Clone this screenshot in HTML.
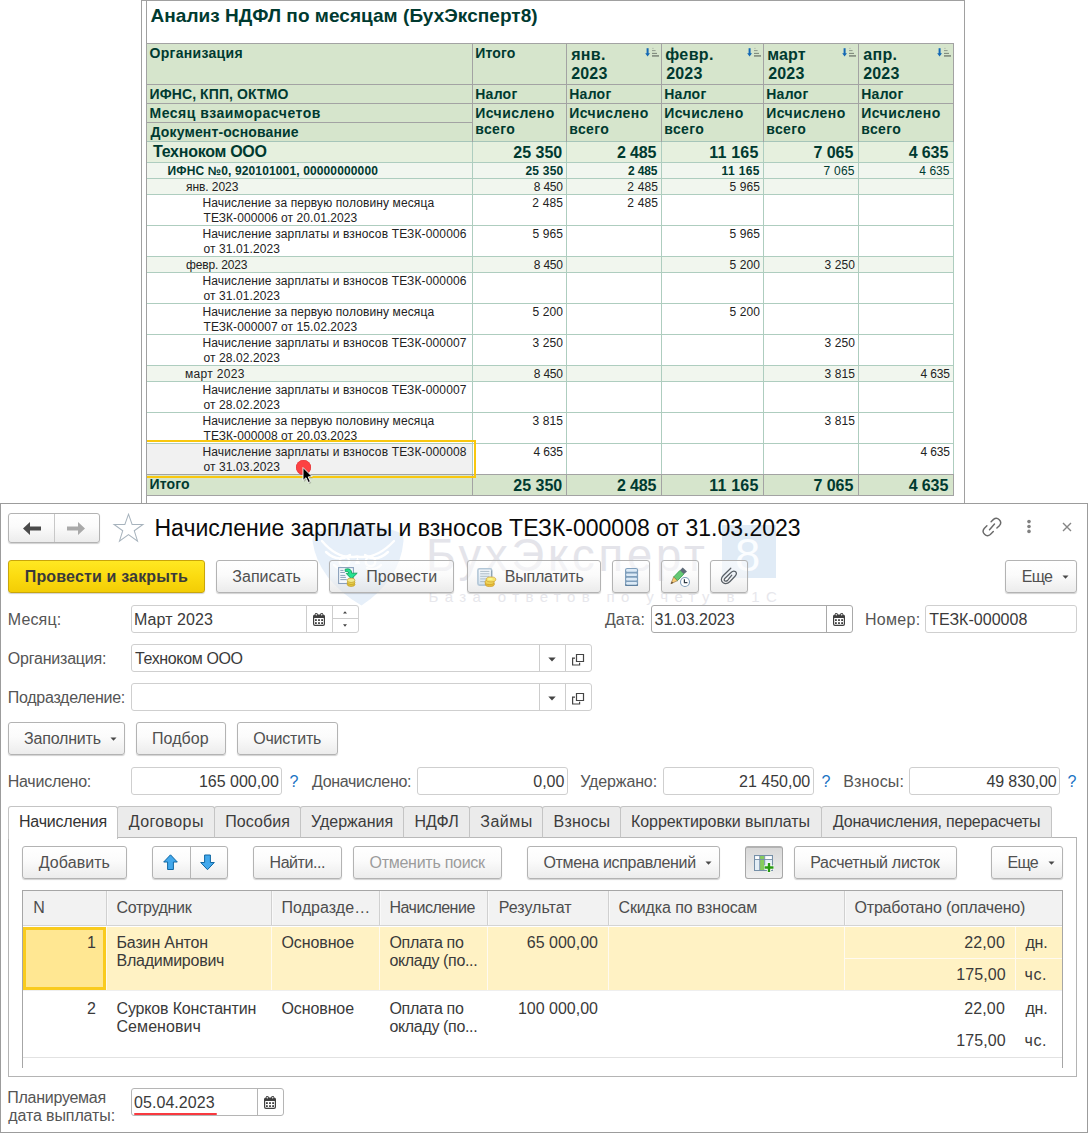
<!DOCTYPE html><html><head><meta charset="utf-8"><title>1C</title><style>
*{box-sizing:border-box;margin:0;padding:0}
html,body{width:1088px;height:1133px;overflow:hidden;background:#fff}
body{font-family:"Liberation Sans",sans-serif;position:relative;color:#333}
.a{position:absolute;white-space:nowrap}
.ln{position:absolute;background:#9c9c9c}
/* report */
.rc{position:absolute;overflow:hidden}
.rt{position:absolute;white-space:nowrap;color:#222;font-size:12px;line-height:15px}
.hb{font-weight:bold;color:#003a30}
.num{text-align:right}
/* form */
.btn{position:absolute;border:1px solid #b3b3b3;border-radius:3px;background:linear-gradient(#ffffff 0%,#fbfbfb 45%,#ececec 100%);box-shadow:0 1px 1px rgba(0,0,0,.18);font-size:15.33px;color:#444;text-align:center;white-space:nowrap}
.fld{position:absolute;border:1px solid #cfcfcf;border-radius:3px;background:#fff;font-size:15.33px;color:#333;white-space:nowrap}
.lbl{position:absolute;font-size:15.33px;color:#4a4a4a;white-space:nowrap}
.tab{position:absolute;top:806px;height:32px;border:1px solid #c4c4c4;border-bottom:none;background:#ebebeb;font-size:15.33px;color:#3c3c3c;text-align:center;white-space:nowrap;border-radius:3px 3px 0 0}
.th{position:absolute;top:891px;height:35px;background:#f2f2f2;font-size:15.33px;color:#4d4d4d;white-space:nowrap;line-height:35px}
.td{position:absolute;font-size:15.33px;color:#333;white-space:nowrap;line-height:18px}
</style></head><body>
<div class="ln" style="left:141px;top:0px;width:1px;height:504px;background:#a0a0a0"></div>
<div class="ln" style="left:146px;top:0px;width:1px;height:504px;background:#a0a0a0"></div>
<div class="ln" style="left:964px;top:0px;width:1px;height:504px;background:#a0a0a0"></div>
<div class="ln" style="left:141px;top:0px;width:824px;height:1px;background:#a0a0a0"></div>
<div class="a" style="left:calc(151.50px - 1.00px);top:3.67px;font-size:19px;font-weight:bold;line-height:24px;color:#003a30"><span style="letter-spacing:0.043px;">Анализ НДФЛ по месяцам (БухЭксперт8)</span></div>
<div class="a" style="left:146px;top:43px;width:808px;height:99px;background:#d6e5cc;"></div>
<div class="a" style="left:146px;top:142px;width:808px;height:20px;background:#e6f0de;"></div>
<div class="a" style="left:146px;top:163px;width:808px;height:15px;background:#f1f6ef;"></div>
<div class="a" style="left:146px;top:179px;width:808px;height:15px;background:#f1f6ee;"></div>
<div class="a" style="left:146px;top:257px;width:808px;height:15px;background:#f1f6ee;"></div>
<div class="a" style="left:146px;top:366px;width:808px;height:15px;background:#f1f6ee;"></div>
<div class="a" style="left:146px;top:475px;width:808px;height:20px;background:#d6e5cc;"></div>
<div class="ln" style="left:146px;top:162px;width:808px;height:1px;background:#aecdbf"></div>
<div class="ln" style="left:146px;top:178px;width:808px;height:1px;background:#aecdbf"></div>
<div class="ln" style="left:146px;top:194px;width:808px;height:1px;background:#aecdbf"></div>
<div class="ln" style="left:146px;top:225px;width:808px;height:1px;background:#aecdbf"></div>
<div class="ln" style="left:146px;top:256px;width:808px;height:1px;background:#aecdbf"></div>
<div class="ln" style="left:146px;top:272px;width:808px;height:1px;background:#aecdbf"></div>
<div class="ln" style="left:146px;top:303px;width:808px;height:1px;background:#aecdbf"></div>
<div class="ln" style="left:146px;top:334px;width:808px;height:1px;background:#aecdbf"></div>
<div class="ln" style="left:146px;top:365px;width:808px;height:1px;background:#aecdbf"></div>
<div class="ln" style="left:146px;top:381px;width:808px;height:1px;background:#aecdbf"></div>
<div class="ln" style="left:146px;top:412px;width:808px;height:1px;background:#aecdbf"></div>
<div class="ln" style="left:146px;top:443px;width:808px;height:1px;background:#aecdbf"></div>
<div class="ln" style="left:472px;top:142px;width:1px;height:333px;background:#aecdbf"></div>
<div class="ln" style="left:566px;top:142px;width:1px;height:333px;background:#aecdbf"></div>
<div class="ln" style="left:661px;top:142px;width:1px;height:333px;background:#aecdbf"></div>
<div class="ln" style="left:763px;top:142px;width:1px;height:333px;background:#aecdbf"></div>
<div class="ln" style="left:858px;top:142px;width:1px;height:333px;background:#aecdbf"></div>
<div class="ln" style="left:953px;top:142px;width:1px;height:333px;background:#aecdbf"></div>
<div class="ln" style="left:146px;top:142px;width:1px;height:362px;background:#a0a0a0"></div>
<div class="ln" style="left:146px;top:43px;width:808px;height:1px;background:#a3a3a3"></div>
<div class="ln" style="left:146px;top:84px;width:808px;height:1px;background:#a3a3a3"></div>
<div class="ln" style="left:146px;top:103px;width:808px;height:1px;background:#a3a3a3"></div>
<div class="ln" style="left:146px;top:122px;width:327px;height:1px;background:#a3a3a3"></div>
<div class="ln" style="left:146px;top:141px;width:808px;height:1px;background:#a6c5b9"></div>
<div class="ln" style="left:146px;top:43px;width:1px;height:99px;background:#a3a3a3"></div>
<div class="ln" style="left:472px;top:43px;width:1px;height:99px;background:#a3a3a3"></div>
<div class="ln" style="left:566px;top:43px;width:1px;height:99px;background:#a3a3a3"></div>
<div class="ln" style="left:661px;top:43px;width:1px;height:99px;background:#a3a3a3"></div>
<div class="ln" style="left:763px;top:43px;width:1px;height:99px;background:#a3a3a3"></div>
<div class="ln" style="left:858px;top:43px;width:1px;height:99px;background:#a3a3a3"></div>
<div class="ln" style="left:953px;top:43px;width:1px;height:99px;background:#a3a3a3"></div>
<div class="ln" style="left:146px;top:474px;width:808px;height:1px;background:#a3a3a3"></div>
<div class="ln" style="left:146px;top:495px;width:808px;height:1px;background:#a3a3a3"></div>
<div class="ln" style="left:146px;top:474px;width:1px;height:22px;background:#a3a3a3"></div>
<div class="ln" style="left:472px;top:474px;width:1px;height:22px;background:#a3a3a3"></div>
<div class="ln" style="left:566px;top:474px;width:1px;height:22px;background:#a3a3a3"></div>
<div class="ln" style="left:661px;top:474px;width:1px;height:22px;background:#a3a3a3"></div>
<div class="ln" style="left:763px;top:474px;width:1px;height:22px;background:#a3a3a3"></div>
<div class="ln" style="left:858px;top:474px;width:1px;height:22px;background:#a3a3a3"></div>
<div class="ln" style="left:953px;top:474px;width:1px;height:22px;background:#a3a3a3"></div>
<div class="a" style="left:calc(150.50px - 1.00px);top:44.40px;font-size:14px;font-weight:bold;line-height:18px;color:#003a30"><span style="letter-spacing:0.300px;">Организация</span></div>
<div class="a" style="left:calc(150.50px - 1.00px);top:85.15px;font-size:14px;font-weight:bold;line-height:18px;color:#003a30"><span style="letter-spacing:0.100px;">ИФНС, КПП, ОКТМО</span></div>
<div class="a" style="left:calc(150.50px - 1.00px);top:103.90px;font-size:14px;font-weight:bold;line-height:18px;color:#003a30"><span style="letter-spacing:0.487px;">Месяц взаиморасчетов</span></div>
<div class="a" style="left:calc(150.50px - 0.00px);top:123.15px;font-size:14px;font-weight:bold;line-height:18px;color:#003a30"><span style="letter-spacing:0.147px;">Документ-основание</span></div>
<div class="a" style="left:calc(476.25px - 1.00px);top:44.40px;font-size:14px;font-weight:bold;line-height:18px;color:#003a30"><span style="letter-spacing:0.125px;">Итого</span></div>
<div class="a" style="left:calc(571.20px - 0.00px);top:44.96px;font-size:16px;font-weight:bold;line-height:20px;color:#003a30"><span style="letter-spacing:0.333px;">янв.</span></div>
<div class="a" style="left:calc(571.20px - 0.00px);top:64.21px;font-size:16px;font-weight:bold;line-height:20px;color:#003a30"><span style="letter-spacing:0.167px;">2023</span></div>
<div class="a" style="left:calc(666.20px - 1.00px);top:44.96px;font-size:16px;font-weight:bold;line-height:20px;color:#003a30"><span style="letter-spacing:0.375px;">февр.</span></div>
<div class="a" style="left:calc(666.20px - 0.00px);top:64.21px;font-size:16px;font-weight:bold;line-height:20px;color:#003a30"><span style="letter-spacing:0.167px;">2023</span></div>
<div class="a" style="left:calc(768.20px - 1.00px);top:44.96px;font-size:16px;font-weight:bold;line-height:20px;color:#003a30"><span style="letter-spacing:0.167px;">март</span></div>
<div class="a" style="left:calc(768.20px - 0.00px);top:64.21px;font-size:16px;font-weight:bold;line-height:20px;color:#003a30"><span style="letter-spacing:0.167px;">2023</span></div>
<div class="a" style="left:calc(863.20px - 0.00px);top:44.96px;font-size:16px;font-weight:bold;line-height:20px;color:#003a30"><span style="letter-spacing:0.333px;">апр.</span></div>
<div class="a" style="left:calc(863.20px - 0.00px);top:64.21px;font-size:16px;font-weight:bold;line-height:20px;color:#003a30"><span style="letter-spacing:0.167px;">2023</span></div>
<div class="a" style="left:calc(476.25px - 1.00px);top:84.90px;font-size:14px;font-weight:bold;line-height:18px;color:#003a30"><span style="letter-spacing:0.250px;">Налог</span></div>
<div class="a" style="left:calc(476.25px - 1.00px);top:104.15px;font-size:14px;font-weight:bold;line-height:18px;color:#003a30"><span style="letter-spacing:0.438px;">Исчислено</span></div>
<div class="a" style="left:calc(476.25px - 1.00px);top:119.90px;font-size:14px;font-weight:bold;line-height:18px;color:#003a30"><span style="letter-spacing:0.375px;">всего</span></div>
<div class="a" style="left:calc(570.25px - 1.00px);top:84.90px;font-size:14px;font-weight:bold;line-height:18px;color:#003a30"><span style="letter-spacing:0.250px;">Налог</span></div>
<div class="a" style="left:calc(570.25px - 1.00px);top:104.15px;font-size:14px;font-weight:bold;line-height:18px;color:#003a30"><span style="letter-spacing:0.438px;">Исчислено</span></div>
<div class="a" style="left:calc(570.25px - 1.00px);top:119.90px;font-size:14px;font-weight:bold;line-height:18px;color:#003a30"><span style="letter-spacing:0.375px;">всего</span></div>
<div class="a" style="left:calc(665.25px - 1.00px);top:84.90px;font-size:14px;font-weight:bold;line-height:18px;color:#003a30"><span style="letter-spacing:0.250px;">Налог</span></div>
<div class="a" style="left:calc(665.25px - 1.00px);top:104.15px;font-size:14px;font-weight:bold;line-height:18px;color:#003a30"><span style="letter-spacing:0.438px;">Исчислено</span></div>
<div class="a" style="left:calc(665.25px - 1.00px);top:119.90px;font-size:14px;font-weight:bold;line-height:18px;color:#003a30"><span style="letter-spacing:0.375px;">всего</span></div>
<div class="a" style="left:calc(767.25px - 1.00px);top:84.90px;font-size:14px;font-weight:bold;line-height:18px;color:#003a30"><span style="letter-spacing:0.250px;">Налог</span></div>
<div class="a" style="left:calc(767.25px - 1.00px);top:104.15px;font-size:14px;font-weight:bold;line-height:18px;color:#003a30"><span style="letter-spacing:0.438px;">Исчислено</span></div>
<div class="a" style="left:calc(767.25px - 1.00px);top:119.90px;font-size:14px;font-weight:bold;line-height:18px;color:#003a30"><span style="letter-spacing:0.375px;">всего</span></div>
<div class="a" style="left:calc(862.25px - 1.00px);top:84.90px;font-size:14px;font-weight:bold;line-height:18px;color:#003a30"><span style="letter-spacing:0.250px;">Налог</span></div>
<div class="a" style="left:calc(862.25px - 1.00px);top:104.15px;font-size:14px;font-weight:bold;line-height:18px;color:#003a30"><span style="letter-spacing:0.438px;">Исчислено</span></div>
<div class="a" style="left:calc(862.25px - 1.00px);top:119.90px;font-size:14px;font-weight:bold;line-height:18px;color:#003a30"><span style="letter-spacing:0.375px;">всего</span></div>
<svg class="a" style="left:645px;top:47px" width="15" height="11" viewBox="0 0 15 11"><path d="M2.6 1.2v6" stroke="#1468b4" stroke-width="2"/><path d="M0.2 6.2h4.8L2.6 9.5z" fill="#1468b4"/><path d="M7 1.4h1.8" stroke="#b9c4b4" stroke-width="1"/><path d="M7 3.6h3.6" stroke="#8f998c" stroke-width="1"/><path d="M7 6.4h5" stroke="#7f8a7c" stroke-width="1.1"/><path d="M7 8.9h7" stroke="#8a9486" stroke-width="1.8"/></svg>
<svg class="a" style="left:747px;top:47px" width="15" height="11" viewBox="0 0 15 11"><path d="M2.6 1.2v6" stroke="#1468b4" stroke-width="2"/><path d="M0.2 6.2h4.8L2.6 9.5z" fill="#1468b4"/><path d="M7 1.4h1.8" stroke="#b9c4b4" stroke-width="1"/><path d="M7 3.6h3.6" stroke="#8f998c" stroke-width="1"/><path d="M7 6.4h5" stroke="#7f8a7c" stroke-width="1.1"/><path d="M7 8.9h7" stroke="#8a9486" stroke-width="1.8"/></svg>
<svg class="a" style="left:842px;top:47px" width="15" height="11" viewBox="0 0 15 11"><path d="M2.6 1.2v6" stroke="#1468b4" stroke-width="2"/><path d="M0.2 6.2h4.8L2.6 9.5z" fill="#1468b4"/><path d="M7 1.4h1.8" stroke="#b9c4b4" stroke-width="1"/><path d="M7 3.6h3.6" stroke="#8f998c" stroke-width="1"/><path d="M7 6.4h5" stroke="#7f8a7c" stroke-width="1.1"/><path d="M7 8.9h7" stroke="#8a9486" stroke-width="1.8"/></svg>
<svg class="a" style="left:937px;top:47px" width="15" height="11" viewBox="0 0 15 11"><path d="M2.6 1.2v6" stroke="#1468b4" stroke-width="2"/><path d="M0.2 6.2h4.8L2.6 9.5z" fill="#1468b4"/><path d="M7 1.4h1.8" stroke="#b9c4b4" stroke-width="1"/><path d="M7 3.6h3.6" stroke="#8f998c" stroke-width="1"/><path d="M7 6.4h5" stroke="#7f8a7c" stroke-width="1.1"/><path d="M7 8.9h7" stroke="#8a9486" stroke-width="1.8"/></svg>
<div class="a" style="left:calc(153.00px - 0.00px);top:142.21px;font-size:16px;font-weight:bold;line-height:20px;color:#003a30"><span style="letter-spacing:-0.273px;">Техноком ООО</span></div>
<div class="a" style="left:calc(513.25px - 0.00px);top:142.71px;font-size:16px;font-weight:bold;line-height:20px;color:#003a30"><span style="letter-spacing:0.000px;">25&nbsp;350</span></div>
<div class="a" style="left:calc(617.00px - 0.00px);top:142.71px;font-size:16px;font-weight:bold;line-height:20px;color:#003a30"><span style="letter-spacing:-0.188px;">2&nbsp;485</span></div>
<div class="a" style="left:calc(710.25px - 1.00px);top:142.71px;font-size:16px;font-weight:bold;line-height:20px;color:#003a30"><span style="letter-spacing:0.200px;">11&nbsp;165</span></div>
<div class="a" style="left:calc(814.50px - 1.00px);top:142.71px;font-size:16px;font-weight:bold;line-height:20px;color:#003a30"><span style="letter-spacing:-0.062px;">7&nbsp;065</span></div>
<div class="a" style="left:calc(908.75px - 0.00px);top:142.71px;font-size:16px;font-weight:bold;line-height:20px;color:#003a30"><span style="letter-spacing:-0.125px;">4&nbsp;635</span></div>
<div class="a" style="left:calc(168.50px - 1.00px);top:163.89px;font-size:12px;font-weight:bold;line-height:15px;color:#003a30"><span style="letter-spacing:0.133px;">ИФНС №0, 920101001, 00000000000</span></div>
<div class="a" style="left:calc(525.50px - 0.00px);top:163.89px;font-size:12px;font-weight:bold;line-height:15px;color:#003a30"><span style="letter-spacing:0.200px;">25&nbsp;350</span></div>
<div class="a" style="left:calc(628.00px - 0.00px);top:163.89px;font-size:12px;font-weight:bold;line-height:15px;color:#003a30"><span style="letter-spacing:-0.125px;">2&nbsp;485</span></div>
<div class="a" style="left:calc(722.50px - 1.00px);top:163.89px;font-size:12px;font-weight:bold;line-height:15px;color:#003a30"><span style="letter-spacing:0.400px;">11&nbsp;165</span></div>
<div class="a" style="left:calc(824.50px - 1.00px);top:163.89px;font-size:12px;line-height:15px;color:#003a30"><span style="letter-spacing:0.250px;">7&nbsp;065</span></div>
<div class="a" style="left:calc(919.25px - 0.00px);top:163.89px;font-size:12px;line-height:15px;color:#003a30"><span style="letter-spacing:0.062px;">4&nbsp;635</span></div>
<div class="a" style="left:147px;top:444px;width:325px;height:30px;background:#f1f1f1;"></div>
<div class="a" style="left:calc(186.00px - 0.00px);top:179.79px;font-size:12px;line-height:15px;color:#222"><span style="letter-spacing:-0.062px;">янв. 2023</span></div>
<div class="a" style="left:calc(533.75px - 0.00px);top:179.79px;font-size:12px;line-height:15px;color:#222"><span style="letter-spacing:-0.188px;">8&nbsp;450</span></div>
<div class="a" style="left:calc(628.25px - 1.00px);top:179.79px;font-size:12px;line-height:15px;color:#222"><span style="letter-spacing:0.188px;">2&nbsp;485</span></div>
<div class="a" style="left:calc(730.50px - 1.00px);top:179.79px;font-size:12px;line-height:15px;color:#222"><span style="letter-spacing:0.125px;">5&nbsp;965</span></div>
<div class="a" style="left:calc(203.50px - 1.00px);top:195.59px;font-size:12px;line-height:15px;color:#222"><span style="letter-spacing:0.114px;">Начисление за первую половину месяца</span></div>
<div class="a" style="left:calc(203.50px - 0.00px);top:210.79px;font-size:12px;line-height:15px;color:#222"><span style="letter-spacing:0.073px;">ТЕЗК-000006 от 20.01.2023</span></div>
<div class="a" style="left:calc(533.25px - 1.00px);top:195.59px;font-size:12px;line-height:15px;color:#222"><span style="letter-spacing:0.188px;">2&nbsp;485</span></div>
<div class="a" style="left:calc(628.25px - 1.00px);top:195.59px;font-size:12px;line-height:15px;color:#222"><span style="letter-spacing:0.188px;">2&nbsp;485</span></div>
<div class="a" style="left:calc(203.50px - 1.00px);top:226.59px;font-size:12px;line-height:15px;color:#222"><span style="letter-spacing:0.144px;">Начисление зарплаты и взносов ТЕЗК-000006</span></div>
<div class="a" style="left:calc(203.50px - 0.00px);top:241.79px;font-size:12px;line-height:15px;color:#222"><span style="letter-spacing:0.104px;">от 31.01.2023</span></div>
<div class="a" style="left:calc(533.50px - 1.00px);top:226.59px;font-size:12px;line-height:15px;color:#222"><span style="letter-spacing:0.125px;">5&nbsp;965</span></div>
<div class="a" style="left:calc(730.50px - 1.00px);top:226.59px;font-size:12px;line-height:15px;color:#222"><span style="letter-spacing:0.125px;">5&nbsp;965</span></div>
<div class="a" style="left:calc(186.00px - 0.00px);top:257.79px;font-size:12px;line-height:15px;color:#222"><span style="letter-spacing:-0.167px;">февр. 2023</span></div>
<div class="a" style="left:calc(533.75px - 0.00px);top:257.79px;font-size:12px;line-height:15px;color:#222"><span style="letter-spacing:-0.188px;">8&nbsp;450</span></div>
<div class="a" style="left:calc(730.50px - 1.00px);top:257.79px;font-size:12px;line-height:15px;color:#222"><span style="letter-spacing:0.125px;">5&nbsp;200</span></div>
<div class="a" style="left:calc(825.50px - 1.00px);top:257.79px;font-size:12px;line-height:15px;color:#222"><span style="letter-spacing:0.125px;">3&nbsp;250</span></div>
<div class="a" style="left:calc(203.50px - 1.00px);top:273.59px;font-size:12px;line-height:15px;color:#222"><span style="letter-spacing:0.144px;">Начисление зарплаты и взносов ТЕЗК-000006</span></div>
<div class="a" style="left:calc(203.50px - 0.00px);top:288.79px;font-size:12px;line-height:15px;color:#222"><span style="letter-spacing:0.104px;">от 31.01.2023</span></div>
<div class="a" style="left:calc(203.50px - 1.00px);top:304.59px;font-size:12px;line-height:15px;color:#222"><span style="letter-spacing:0.114px;">Начисление за первую половину месяца</span></div>
<div class="a" style="left:calc(203.50px - 0.00px);top:319.79px;font-size:12px;line-height:15px;color:#222"><span style="letter-spacing:0.073px;">ТЕЗК-000007 от 15.02.2023</span></div>
<div class="a" style="left:calc(533.50px - 1.00px);top:304.59px;font-size:12px;line-height:15px;color:#222"><span style="letter-spacing:0.125px;">5&nbsp;200</span></div>
<div class="a" style="left:calc(730.50px - 1.00px);top:304.59px;font-size:12px;line-height:15px;color:#222"><span style="letter-spacing:0.125px;">5&nbsp;200</span></div>
<div class="a" style="left:calc(203.50px - 1.00px);top:335.59px;font-size:12px;line-height:15px;color:#222"><span style="letter-spacing:0.144px;">Начисление зарплаты и взносов ТЕЗК-000007</span></div>
<div class="a" style="left:calc(203.50px - 0.00px);top:350.79px;font-size:12px;line-height:15px;color:#222"><span style="letter-spacing:0.104px;">от 28.02.2023</span></div>
<div class="a" style="left:calc(533.50px - 1.00px);top:335.59px;font-size:12px;line-height:15px;color:#222"><span style="letter-spacing:0.125px;">3&nbsp;250</span></div>
<div class="a" style="left:calc(825.50px - 1.00px);top:335.59px;font-size:12px;line-height:15px;color:#222"><span style="letter-spacing:0.125px;">3&nbsp;250</span></div>
<div class="a" style="left:calc(186.00px - 1.00px);top:366.79px;font-size:12px;line-height:15px;color:#222"><span style="letter-spacing:0.312px;">март 2023</span></div>
<div class="a" style="left:calc(533.75px - 0.00px);top:366.79px;font-size:12px;line-height:15px;color:#222"><span style="letter-spacing:-0.188px;">8&nbsp;450</span></div>
<div class="a" style="left:calc(825.50px - 1.00px);top:366.79px;font-size:12px;line-height:15px;color:#222"><span style="letter-spacing:0.125px;">3&nbsp;815</span></div>
<div class="a" style="left:calc(920.50px - 0.00px);top:366.79px;font-size:12px;line-height:15px;color:#222"><span style="letter-spacing:-0.125px;">4&nbsp;635</span></div>
<div class="a" style="left:calc(203.50px - 1.00px);top:382.59px;font-size:12px;line-height:15px;color:#222"><span style="letter-spacing:0.144px;">Начисление зарплаты и взносов ТЕЗК-000007</span></div>
<div class="a" style="left:calc(203.50px - 0.00px);top:397.79px;font-size:12px;line-height:15px;color:#222"><span style="letter-spacing:0.104px;">от 28.02.2023</span></div>
<div class="a" style="left:calc(203.50px - 1.00px);top:413.59px;font-size:12px;line-height:15px;color:#222"><span style="letter-spacing:0.114px;">Начисление за первую половину месяца</span></div>
<div class="a" style="left:calc(203.50px - 0.00px);top:428.79px;font-size:12px;line-height:15px;color:#222"><span style="letter-spacing:0.073px;">ТЕЗК-000008 от 20.03.2023</span></div>
<div class="a" style="left:calc(533.50px - 1.00px);top:413.59px;font-size:12px;line-height:15px;color:#222"><span style="letter-spacing:0.125px;">3&nbsp;815</span></div>
<div class="a" style="left:calc(825.50px - 1.00px);top:413.59px;font-size:12px;line-height:15px;color:#222"><span style="letter-spacing:0.125px;">3&nbsp;815</span></div>
<div class="a" style="left:calc(203.50px - 1.00px);top:444.59px;font-size:12px;line-height:15px;color:#222"><span style="letter-spacing:0.144px;">Начисление зарплаты и взносов ТЕЗК-000008</span></div>
<div class="a" style="left:calc(203.50px - 0.00px);top:459.79px;font-size:12px;line-height:15px;color:#222"><span style="letter-spacing:0.104px;">от 31.03.2023</span></div>
<div class="a" style="left:calc(533.50px - 0.00px);top:444.59px;font-size:12px;line-height:15px;color:#222"><span style="letter-spacing:-0.125px;">4&nbsp;635</span></div>
<div class="a" style="left:calc(920.50px - 0.00px);top:444.59px;font-size:12px;line-height:15px;color:#222"><span style="letter-spacing:-0.125px;">4&nbsp;635</span></div>
<div class="a" style="left:calc(150.50px - 1.00px);top:475.15px;font-size:14px;font-weight:bold;line-height:18px;color:#003a30"><span style="letter-spacing:0.125px;">Итого</span></div>
<div class="a" style="left:calc(513.25px - 0.00px);top:475.71px;font-size:16px;font-weight:bold;line-height:20px;color:#003a30"><span style="letter-spacing:0.000px;">25&nbsp;350</span></div>
<div class="a" style="left:calc(617.00px - 0.00px);top:475.71px;font-size:16px;font-weight:bold;line-height:20px;color:#003a30"><span style="letter-spacing:-0.188px;">2&nbsp;485</span></div>
<div class="a" style="left:calc(710.25px - 1.00px);top:475.71px;font-size:16px;font-weight:bold;line-height:20px;color:#003a30"><span style="letter-spacing:0.200px;">11&nbsp;165</span></div>
<div class="a" style="left:calc(814.50px - 1.00px);top:475.71px;font-size:16px;font-weight:bold;line-height:20px;color:#003a30"><span style="letter-spacing:-0.062px;">7&nbsp;065</span></div>
<div class="a" style="left:calc(908.75px - 0.00px);top:475.71px;font-size:16px;font-weight:bold;line-height:20px;color:#003a30"><span style="letter-spacing:-0.125px;">4&nbsp;635</span></div>
<div class="a" style="left:147px;top:440px;width:329px;height:38px;border:2px solid #f9c70e;border-left:0"></div>
<div class="a" style="left:296px;top:460px;width:15px;height:15px;border-radius:8px;background:#fc4143;box-shadow:inset 0 0 0 0.6px #e0393b"></div>
<svg class="a" style="left:298px;top:463px" width="20" height="24" viewBox="298 463 20 24"><path d="M304 469.5L304 482L307 479.4L309.2 484L311.4 483L309.2 478.4L313 478.2Z" fill="#000" opacity=".18"/><path d="M303 467.5L303 480.4L306 477.7L308.2 482.5L310.4 481.5L308.2 476.9L312.1 476.6Z" fill="#000" stroke="#fff" stroke-width="0.9" stroke-linejoin="round"/></svg>
<div class="a" style="left:0;top:503px;width:1088px;height:630px;border:1px solid #9c9c9c;background:#fff"></div>
<svg class="a" style="left:305px;top:520px;" width="110" height="90" viewBox="305 520 110 90"><path d="M312.5 541Q312 534 318 532Q340 524 358 524.5Q378 524 398 532Q404 534 403.5 541Q400 580 361.5 605.5Q318 580 312.5 541z" fill="#e6eff9"/><g fill="none" stroke="#fff" stroke-width="2.4" stroke-linecap="round"><circle cx="344.5" cy="561.5" r="4.8"/><circle cx="370.5" cy="561.5" r="4.8"/><path d="M322 541Q338 560 357 556.5Q376 560 394 541"/><path d="M326 552Q338 563 350 555M388 552Q376 563 365 555"/><path d="M334 565Q340 571 348 568M381 565Q375 571 367 568"/></g><path d="M357.5 557l-2.6 7h5.2z" fill="#fff"/></svg>
<div class="a" style="left:calc(430px - 4.00px);top:530.77px;font-size:45.4px;line-height:50px;color:#e4e4ea;;"><span style="letter-spacing:3.778px;">БухЭксперт</span></div>
<div class="a" style="left:722px;top:525px;width:54px;height:53px;background:#e0ebf6;"></div>
<div class="a" style="left:calc(737px - 2.00px);top:530.77px;font-size:45.4px;line-height:50px;color:#fbfdff;;"><span style="letter-spacing:-182.000px;">8</span></div>
<div class="a" style="left:calc(429.5px - 1.00px);top:572.10px;font-size:15px;line-height:50px;color:#e7e7ec;;"><span style="letter-spacing:6.380px;">База ответов по учету в 1С</span></div>
<div class="btn" style="left:8px;top:513px;width:92px;height:30px;"></div>
<div class="ln" style="left:54px;top:514px;width:1px;height:28px;background:#c8c8c8"></div>
<svg class="a" style="left:22px;top:521px;" width="20" height="15" viewBox="0 0 20 15"><path d="M1 7.5L8 1v4.6h11v3.8H8V14z" fill="#4a4a4a"/></svg>
<svg class="a" style="left:66px;top:521px;" width="20" height="15" viewBox="0 0 20 15"><path d="M19 7.5L12 1v4.6H1v3.8h11V14z" fill="#a9a9a9"/></svg>
<svg class="a" style="left:112.4px;top:512.2px;" width="33" height="32" viewBox="0 0 31 30"><path d="M15.5 2l3.4 9.6h10.2l-8.2 6 3.1 9.8-8.5-6.1-8.5 6.1 3.1-9.8-8.2-6h10.2z" fill="#fff" stroke="#a7b3bd" stroke-width="0.95"/></svg>
<div class="a" style="left:calc(156.50px - 2.00px);top:514.28px;font-size:23px;line-height:28px;color:#0a0a0a"><span style="letter-spacing:0.009px;">Начисление зарплаты и взносов ТЕЗК-000008 от 31.03.2023</span></div>
<svg class="a" style="left:980px;top:515px;" width="24" height="24" viewBox="980 515 24 24"><g fill="none" stroke="#6a6a6a" stroke-width="1.45" stroke-linecap="round"><path d="M991.1 521.8L993.5 519.4A4.3 4.3 0 0 1 999.6 525.4L996.9 528"/><path d="M986.9 525.8L984.2 528.5A4.3 4.3 0 0 0 990.3 534.5L993.3 531.4"/><path d="M989.5 529.8L994.5 524"/></g></svg>
<svg class="a" style="left:1026px;top:519px;" width="6" height="15" viewBox="0 0 6 15"><circle cx="3" cy="2.6" r="1.8" fill="#808080"/><circle cx="3" cy="7.5" r="1.8" fill="#808080"/><circle cx="3" cy="12.4" r="1.8" fill="#808080"/></svg>
<svg class="a" style="left:1061px;top:521px;" width="12" height="12" viewBox="0 0 12 12"><path d="M2 2l8 8M10 2l-8 8" stroke="#858585" stroke-width="1.4" fill="none"/></svg>
<div class="btn" style="left:8px;top:560px;width:197px;height:33px;border-color:#c9a60a;background:linear-gradient(#ffe822 0%,#fbdb10 50%,#f3cd05 100%)"></div>
<div class="a" style="left:calc(25.75px - 1.00px);top:568.11px;font-size:16px;font-weight:bold;line-height:18px;color:#3a3a3a"><span style="letter-spacing:0.162px;">Провести и закрыть</span></div>
<div class="btn" style="left:216px;top:560px;width:102px;height:33px;background:linear-gradient(rgba(255,255,255,.6) 0%,rgba(248,248,248,.6) 45%,rgba(222,222,222,.6) 100%)"></div>
<div class="a" style="left:calc(233.25px - 1.00px);top:567.51px;font-size:16px;line-height:18px;color:#505050"><span style="letter-spacing:0.036px;">Записать</span></div>
<div class="btn" style="left:329px;top:560px;width:125px;height:33px;background:linear-gradient(rgba(255,255,255,.6) 0%,rgba(248,248,248,.6) 45%,rgba(222,222,222,.6) 100%)"></div>
<div class="a" style="left:calc(367.30px - 1.00px);top:567.51px;font-size:16px;line-height:18px;color:#505050"><span style="letter-spacing:0.000px;">Провести</span></div>
<div class="btn" style="left:467px;top:560px;width:134px;height:33px;background:linear-gradient(rgba(255,255,255,.6) 0%,rgba(248,248,248,.6) 45%,rgba(222,222,222,.6) 100%)"></div>
<div class="a" style="left:calc(505.70px - 1.00px);top:567.51px;font-size:16px;line-height:18px;color:#505050"><span style="letter-spacing:-0.188px;">Выплатить</span></div>
<div class="btn" style="left:612px;top:560px;width:38px;height:33px;background:linear-gradient(rgba(255,255,255,.6) 0%,rgba(248,248,248,.6) 45%,rgba(222,222,222,.6) 100%)"></div>
<div class="btn" style="left:661px;top:560px;width:38px;height:33px;background:linear-gradient(rgba(255,255,255,.6) 0%,rgba(248,248,248,.6) 45%,rgba(222,222,222,.6) 100%)"></div>
<div class="btn" style="left:710px;top:560px;width:38px;height:33px;background:linear-gradient(rgba(255,255,255,.6) 0%,rgba(248,248,248,.6) 45%,rgba(222,222,222,.6) 100%)"></div>
<div class="btn" style="left:1005px;top:560px;width:72px;height:33px;"></div>
<div class="a" style="left:calc(1022.75px - 1.00px);top:567.51px;font-size:16px;line-height:18px;color:#505050"><span style="letter-spacing:-0.750px;">Еще</span></div>
<svg class="a" style="left:1062px;top:575px;" width="7" height="5" viewBox="0 0 7 5"><path d="M0.5 0.6h6L3.5 3.8z" fill="#484848"/></svg>
<svg class="a" style="left:336px;top:565px;" width="24" height="24" viewBox="336 565 24 24"><rect x="338.6" y="567.6" width="14.8" height="15.9" fill="#f6f9fd" stroke="#8aa0bc" stroke-width="1.1"/><path d="M340.3 570.4h3.2M340.3 572.5h4.6M340.3 575.4h5M340.3 577.4h5.6M340.3 579.6h6.5" stroke="#8ba1bb" stroke-width="1"/><path d="M345.2 569.2Q351.5 567.6 351.7 573.2L357.2 573.2L351.4 578.9L346.2 573.4L349 573.2Q348.8 570.6 345.2 571.4z" fill="#22e291" stroke="#11a35c" stroke-width="0.9" stroke-linejoin="round"/><g stroke="#b9901c" stroke-width="0.6"><ellipse cx="351.1" cy="584.3" rx="3.9" ry="2.2" fill="#e2c63e"/><ellipse cx="351.1" cy="582.3" rx="3.9" ry="2.2" fill="#e9d452"/><ellipse cx="351.1" cy="580.3" rx="3.9" ry="2.2" fill="#f1ea8e"/></g></svg>
<svg class="a" style="left:475px;top:565px;" width="24" height="24" viewBox="475 565 24 24"><defs><linearGradient id="dg" x1="0" y1="0" x2="0" y2="1"><stop offset="0" stop-color="#f7fafd"/><stop offset="1" stop-color="#d3e2ee"/></linearGradient></defs><rect x="477.9" y="568.7" width="13.8" height="16.4" rx="1.6" fill="url(#dg)" stroke="#b3c7d7" stroke-width="1.6"/><path d="M480.2 571.4h9.2M480.2 573.8h9.2M480.2 576.3h9.2M480.2 578.9h6M480.2 581.6h5" stroke="#aebdc9" stroke-width="1"/><path d="M491.6 570.5v6" stroke="#8fa3b3" stroke-width="1.2"/><g stroke="#c8931f" stroke-width="0.6"><ellipse cx="489.8" cy="584" rx="4.6" ry="2.6" fill="#e6bd3a"/><ellipse cx="489.6" cy="582" rx="4.6" ry="2.5" fill="#efd458"/><ellipse cx="491" cy="579.4" rx="4.8" ry="2.5" fill="#f6e36c"/></g><ellipse cx="490.3" cy="579" rx="2.6" ry="1.1" fill="#fcf88e"/></svg>
<svg class="a" style="left:623px;top:566px;" width="18" height="22" viewBox="623 566 18 22"><rect x="625" y="567.9" width="13.1" height="18.2" rx="2.2" fill="#7f9fbc"/><rect x="625" y="584" width="13.1" height="2.1" rx="1" fill="#5f809f"/><g fill="#dceaf6"><rect x="626.1" y="569.1" width="10.9" height="2.7" rx="1"/><rect x="626.1" y="573.5" width="10.9" height="2.6" rx="1"/><rect x="626.1" y="577.8" width="10.9" height="2.6" rx="1"/><rect x="626.1" y="582.1" width="10.9" height="2.6" rx="1"/></g></svg>
<svg class="a" style="left:668px;top:565px;" width="24" height="24" viewBox="668 565 24 24"><path d="M673.6 577L680 570.3L684 573.9L677.4 580.7z" fill="#66c874" stroke="#23993f" stroke-width="0.7"/><path d="M680 570.3L682.7 567.5L687 571.5L684 573.9z" fill="#5f6b78"/><path d="M670.9 583.8L673.6 577L677.4 580.7z" fill="#f7ca72" stroke="#8a6a3a" stroke-width="0.6"/><path d="M670.9 583.8l0.9-2.4 1.5 1.5z" fill="#5a4630"/><circle cx="685" cy="582" r="4.5" fill="#fff" stroke="#7f9db9" stroke-width="1.1"/><path d="M684.4 579.2v3.4h3" stroke="#2f3a45" stroke-width="1.2" fill="none"/></svg>
<svg class="a" style="left:718px;top:565px;" width="22" height="22" viewBox="718 565 22 22"><path d="M730.8 568.2L723.3 575.5C720.6 578.2 721 581 722.9 582.6C724.9 584.2 727.8 583.7 730 581.5L735 576.3C737 574.2 736.7 572.6 735.3 571.6C733.9 570.6 732.2 571.3 731 572.5L725 578.2C723.8 579.4 724 580.5 725 581C726 581.5 727 581 727.8 580.2L731.8 575.2" fill="none" stroke="#585f66" stroke-width="1.25" stroke-linecap="round"/></svg>
<div class="a" style="left:calc(8.75px - 1.00px);top:610.51px;font-size:16px;line-height:18px;color:#555"><span style="letter-spacing:0.150px;">Месяц:</span></div>
<div class="fld" style="left:131px;top:605px;width:228px;height:28px;"></div>
<div class="a" style="left:calc(135.00px - 1.00px);top:610.51px;font-size:16px;line-height:18px;color:#3a3a3a"><span style="letter-spacing:0.062px;">Март 2023</span></div>
<div class="ln" style="left:306px;top:606px;width:1px;height:26px;background:#cdcdcd"></div>
<div class="ln" style="left:332px;top:606px;width:1px;height:26px;background:#cdcdcd"></div>
<div class="ln" style="left:333px;top:618px;width:25px;height:1px;background:#cdcdcd"></div>
<svg class="a" style="left:313px;top:613px;" width="12" height="13" viewBox="0 0 12 13"><rect x="0.6" y="2" width="10.8" height="10.4" rx="1.4" fill="#fff" stroke="#3f3f3f" stroke-width="1.2"/><path d="M0.6 3.4a1.4 1.4 0 0 1 1.4-1.4h8a1.4 1.4 0 0 1 1.4 1.4v1.7h-10.8z" fill="#3f3f3f"/><rect x="1.8" y="0" width="3" height="3.4" rx="1.4" fill="#3f3f3f"/><rect x="7.2" y="0" width="3" height="3.4" rx="1.4" fill="#3f3f3f"/><rect x="2.85" y="0.8" width="0.9" height="1.8" rx="0.4" fill="#fff"/><rect x="8.25" y="0.8" width="0.9" height="1.8" rx="0.4" fill="#fff"/><g fill="#3f3f3f"><rect x="2" y="6.2" width="1.8" height="1.8"/><rect x="5.1" y="6.2" width="1.8" height="1.8"/><rect x="8.2" y="6.2" width="1.8" height="1.8"/><rect x="2" y="9.2" width="1.8" height="1.8"/><rect x="5.1" y="9.2" width="1.8" height="1.8"/><rect x="8.2" y="9.2" width="1.8" height="1.8"/></g></svg>
<svg class="a" style="left:343px;top:611.4px;" width="4" height="3" viewBox="0 0 4 3"><path d="M0 2.6h4L2 0.2z" fill="#444"/></svg>
<svg class="a" style="left:343px;top:623.6px;" width="4" height="3" viewBox="0 0 4 3"><path d="M0 0.3h4L2 2.7z" fill="#444"/></svg>
<div class="a" style="left:calc(605.00px - 0.00px);top:610.51px;font-size:16px;line-height:18px;color:#555"><span style="letter-spacing:0.000px;">Дата:</span></div>
<div class="fld" style="left:651px;top:605px;width:202px;height:28px;border-color:#a9a9a9"></div>
<div class="a" style="left:calc(655.50px - 1.00px);top:610.51px;font-size:16px;line-height:18px;color:#3a3a3a"><span style="letter-spacing:0.000px;">31.03.2023</span></div>
<div class="ln" style="left:826px;top:606px;width:1px;height:26px;background:#a9a9a9"></div>
<svg class="a" style="left:833px;top:613px;" width="12" height="13" viewBox="0 0 12 13"><rect x="0.6" y="2" width="10.8" height="10.4" rx="1.4" fill="#fff" stroke="#3f3f3f" stroke-width="1.2"/><path d="M0.6 3.4a1.4 1.4 0 0 1 1.4-1.4h8a1.4 1.4 0 0 1 1.4 1.4v1.7h-10.8z" fill="#3f3f3f"/><rect x="1.8" y="0" width="3" height="3.4" rx="1.4" fill="#3f3f3f"/><rect x="7.2" y="0" width="3" height="3.4" rx="1.4" fill="#3f3f3f"/><rect x="2.85" y="0.8" width="0.9" height="1.8" rx="0.4" fill="#fff"/><rect x="8.25" y="0.8" width="0.9" height="1.8" rx="0.4" fill="#fff"/><g fill="#3f3f3f"><rect x="2" y="6.2" width="1.8" height="1.8"/><rect x="5.1" y="6.2" width="1.8" height="1.8"/><rect x="8.2" y="6.2" width="1.8" height="1.8"/><rect x="2" y="9.2" width="1.8" height="1.8"/><rect x="5.1" y="9.2" width="1.8" height="1.8"/><rect x="8.2" y="9.2" width="1.8" height="1.8"/></g></svg>
<div class="a" style="left:calc(866.00px - 1.00px);top:610.51px;font-size:16px;line-height:18px;color:#555"><span style="letter-spacing:0.300px;">Номер:</span></div>
<div class="fld" style="left:925px;top:605px;width:152px;height:28px;"></div>
<div class="a" style="left:calc(929.25px - 0.00px);top:610.51px;font-size:16px;line-height:18px;color:#3a3a3a"><span style="letter-spacing:0.025px;">ТЕЗК-000008</span></div>
<div class="a" style="left:calc(8.75px - 1.00px);top:649.51px;font-size:16px;line-height:18px;color:#555"><span style="letter-spacing:-0.205px;">Организация:</span></div>
<div class="fld" style="left:131px;top:644px;width:461px;height:28px;"></div>
<div class="a" style="left:calc(135.00px - 0.00px);top:649.51px;font-size:16px;line-height:18px;color:#3a3a3a"><span style="letter-spacing:-0.364px;">Техноком ООО</span></div>
<div class="ln" style="left:539px;top:645px;width:1px;height:26px;background:#cdcdcd"></div>
<div class="ln" style="left:565px;top:645px;width:1px;height:26px;background:#cdcdcd"></div>
<svg class="a" style="left:548px;top:657px;" width="8" height="5" viewBox="0 0 8 5"><path d="M0.3 0.5h7.4L4 4.6z" fill="#444"/></svg>
<svg class="a" style="left:572px;top:653px;" width="13" height="13" viewBox="0 0 13 13"><path d="M4.5 1.5h7v7h-7z" fill="#fff" stroke="#444" stroke-width="1.2"/><path d="M3 5.2H0.6v6.8h7V9.8" fill="none" stroke="#444" stroke-width="1.2"/></svg>
<div class="a" style="left:calc(8.75px - 1.00px);top:688.51px;font-size:16px;line-height:18px;color:#555"><span style="letter-spacing:-0.269px;">Подразделение:</span></div>
<div class="fld" style="left:131px;top:683px;width:461px;height:28px;"></div>
<div class="ln" style="left:539px;top:684px;width:1px;height:26px;background:#cdcdcd"></div>
<div class="ln" style="left:565px;top:684px;width:1px;height:26px;background:#cdcdcd"></div>
<svg class="a" style="left:548px;top:696px;" width="8" height="5" viewBox="0 0 8 5"><path d="M0.3 0.5h7.4L4 4.6z" fill="#444"/></svg>
<svg class="a" style="left:572px;top:692px;" width="13" height="13" viewBox="0 0 13 13"><path d="M4.5 1.5h7v7h-7z" fill="#fff" stroke="#444" stroke-width="1.2"/><path d="M3 5.2H0.6v6.8h7V9.8" fill="none" stroke="#444" stroke-width="1.2"/></svg>
<div class="btn" style="left:8px;top:722px;width:117px;height:33px;"></div>
<div class="a" style="left:calc(25.00px - 1.00px);top:729.51px;font-size:16px;line-height:18px;color:#505050"><span style="letter-spacing:-0.188px;">Заполнить</span></div>
<svg class="a" style="left:110px;top:737px;" width="7" height="5" viewBox="0 0 7 5"><path d="M0.5 0.6h6L3.5 3.8z" fill="#484848"/></svg>
<div class="btn" style="left:136px;top:722px;width:90px;height:33px;"></div>
<div class="a" style="left:calc(153.00px - 1.00px);top:729.51px;font-size:16px;line-height:18px;color:#505050"><span style="letter-spacing:0.050px;">Подбор</span></div>
<div class="btn" style="left:237px;top:722px;width:101px;height:33px;"></div>
<div class="a" style="left:calc(254.25px - 1.00px);top:729.51px;font-size:16px;line-height:18px;color:#505050"><span style="letter-spacing:-0.214px;">Очистить</span></div>
<div class="a" style="left:calc(8.75px - 1.00px);top:772.61px;font-size:16px;line-height:18px;color:#555"><span style="letter-spacing:-0.250px;">Начислено:</span></div>
<div class="fld" style="left:131px;top:767px;width:151px;height:28px;"></div>
<div class="a" style="left:calc(200.00px - 1.00px);top:772.61px;font-size:16px;line-height:18px;color:#3a3a3a"><span style="letter-spacing:-0.028px;">165&nbsp;000,00</span></div>
<div class="a" style="left:289.50px;top:772.61px;font-size:16px;line-height:18px;color:#1a73c4">?</div>
<div class="a" style="left:calc(312.00px - 0.00px);top:772.61px;font-size:16px;line-height:18px;color:#555"><span style="letter-spacing:-0.318px;">Доначислено:</span></div>
<div class="fld" style="left:417px;top:767px;width:151px;height:28px;"></div>
<div class="a" style="left:calc(534.25px - 1.00px);top:772.61px;font-size:16px;line-height:18px;color:#3a3a3a"><span style="letter-spacing:0.000px;">0,00</span></div>
<div class="a" style="left:calc(581.25px - 1.00px);top:772.61px;font-size:16px;line-height:18px;color:#555"><span style="letter-spacing:-0.125px;">Удержано:</span></div>
<div class="fld" style="left:663px;top:767px;width:151px;height:28px;"></div>
<div class="a" style="left:calc(740.00px - 1.00px);top:772.61px;font-size:16px;line-height:18px;color:#3a3a3a"><span style="letter-spacing:0.000px;">21&nbsp;450,00</span></div>
<div class="a" style="left:821.50px;top:772.61px;font-size:16px;line-height:18px;color:#1a73c4">?</div>
<div class="a" style="left:calc(844.25px - 1.00px);top:772.61px;font-size:16px;line-height:18px;color:#555"><span style="letter-spacing:0.167px;">Взносы:</span></div>
<div class="fld" style="left:909px;top:767px;width:151px;height:28px;"></div>
<div class="a" style="left:calc(986.50px - 0.00px);top:772.61px;font-size:16px;line-height:18px;color:#3a3a3a"><span style="letter-spacing:-0.125px;">49&nbsp;830,00</span></div>
<div class="a" style="left:1067.50px;top:772.61px;font-size:16px;line-height:18px;color:#1a73c4">?</div>
<div class="a" style="left:8px;top:837px;width:1069px;height:240px;border:1px solid #b4b4b4;background:#fff"></div>
<div class="tab" style="left:8px;width:110px;background:#fff;height:33px"></div>
<div class="a" style="left:calc(20.00px - 1.00px);top:812.51px;font-size:16px;line-height:18px;color:#333"><span style="letter-spacing:-0.222px;">Начисления</span></div>
<div class="tab" style="left:117px;width:98px;border-bottom:1px solid #b9b9b9"></div>
<div class="a" style="left:calc(128.75px - 0.00px);top:812.51px;font-size:16px;line-height:18px;color:#3c3c3c"><span style="letter-spacing:0.393px;">Договоры</span></div>
<div class="tab" style="left:214px;width:87px;border-bottom:1px solid #b9b9b9"></div>
<div class="a" style="left:calc(226.25px - 1.00px);top:812.51px;font-size:16px;line-height:18px;color:#3c3c3c"><span style="letter-spacing:0.083px;">Пособия</span></div>
<div class="tab" style="left:300px;width:104px;border-bottom:1px solid #b9b9b9"></div>
<div class="a" style="left:calc(312.00px - 1.00px);top:812.51px;font-size:16px;line-height:18px;color:#3c3c3c"><span style="letter-spacing:0.000px;">Удержания</span></div>
<div class="tab" style="left:403px;width:67px;border-bottom:1px solid #b9b9b9"></div>
<div class="a" style="left:calc(415.50px - 1.00px);top:812.51px;font-size:16px;line-height:18px;color:#3c3c3c"><span style="letter-spacing:0.000px;">НДФЛ</span></div>
<div class="tab" style="left:469px;width:74px;border-bottom:1px solid #b9b9b9"></div>
<div class="a" style="left:calc(481.25px - 1.00px);top:812.51px;font-size:16px;line-height:18px;color:#3c3c3c"><span style="letter-spacing:0.500px;">Займы</span></div>
<div class="tab" style="left:542px;width:79px;border-bottom:1px solid #b9b9b9"></div>
<div class="a" style="left:calc(554.50px - 1.00px);top:812.51px;font-size:16px;line-height:18px;color:#3c3c3c"><span style="letter-spacing:0.250px;">Взносы</span></div>
<div class="tab" style="left:620px;width:202px;border-bottom:1px solid #b9b9b9"></div>
<div class="a" style="left:calc(632.00px - 1.00px);top:812.51px;font-size:16px;line-height:18px;color:#3c3c3c"><span style="letter-spacing:-0.075px;">Корректировки выплаты</span></div>
<div class="tab" style="left:821px;width:231px;border-bottom:1px solid #b9b9b9"></div>
<div class="a" style="left:calc(833.00px - 0.00px);top:812.51px;font-size:16px;line-height:18px;color:#3c3c3c"><span style="letter-spacing:-0.219px;">Доначисления, перерасчеты</span></div>
<div class="btn" style="left:22px;top:846px;width:105px;height:33px;"></div>
<div class="a" style="left:calc(38.75px - 0.00px);top:853.61px;font-size:16px;line-height:18px;color:#505050"><span style="letter-spacing:0.071px;">Добавить</span></div>
<div class="btn" style="left:152px;top:846px;width:76px;height:33px;"></div>
<div class="ln" style="left:190px;top:847px;width:1px;height:31px;background:#b5b5b5"></div>
<svg class="a" style="left:163px;top:854px;" width="15" height="17" viewBox="0 0 15 17"><path d="M7.5 0.8L14.3 8h-3.9v7.5H4.6V8H0.7z" fill="#42a8ec" stroke="#0f67a3" stroke-width="1" stroke-linejoin="round"/></svg>
<svg class="a" style="left:200px;top:854px;" width="15" height="17" viewBox="0 0 15 17"><g transform="translate(0,16.5) scale(1,-1)"><path d="M7.5 0.8L14.3 8h-3.9v7.5H4.6V8H0.7z" fill="#42a8ec" stroke="#0f67a3" stroke-width="1" stroke-linejoin="round"/></g></svg>
<div class="btn" style="left:253px;top:846px;width:89px;height:33px;"></div>
<div class="a" style="left:calc(270.50px - 1.00px);top:853.61px;font-size:16px;line-height:18px;color:#505050"><span style="letter-spacing:-0.429px;">Найти...</span></div>
<div class="btn" style="left:353px;top:846px;width:149px;height:33px;"></div>
<div class="a" style="left:calc(370.50px - 1.00px);top:853.61px;font-size:16px;line-height:18px;color:#9c9c9c"><span style="letter-spacing:-0.269px;">Отменить поиск</span></div>
<div class="btn" style="left:527px;top:846px;width:193px;height:33px;"></div>
<div class="a" style="left:calc(544.50px - 1.00px);top:853.61px;font-size:16px;line-height:18px;color:#505050"><span style="letter-spacing:-0.338px;">Отмена исправлений</span></div>
<svg class="a" style="left:705px;top:861px;" width="7" height="5" viewBox="0 0 7 5"><path d="M0.5 0.6h6L3.5 3.8z" fill="#484848"/></svg>
<div class="btn" style="left:745px;top:846px;width:38px;height:33px;background:linear-gradient(#d8d8d8,#efefef);border-color:#a8a8a8;border-top:2px solid #b2b2b2;box-shadow:none"></div>
<svg class="a" style="left:754px;top:855px;" width="22" height="20" viewBox="0 0 22 20"><rect x="0.5" y="0.5" width="18" height="15" fill="#e4eef6" stroke="#7690a8"/><rect x="1.5" y="1.5" width="4" height="2.5" fill="#fff"/><rect x="11" y="1.5" width="6.5" height="2.5" fill="#fff"/><rect x="6" y="1" width="4.5" height="14" fill="#86cc5c"/><path d="M5.7 1v14M10.7 1v14M1 4.5h17" stroke="#7690a8" stroke-width="0.9"/><path d="M15 7.5v10M10 12.5h10" stroke="#fff" stroke-width="4.2"/><path d="M15 8v9M10.5 12.5h9" stroke="#2a9a12" stroke-width="2.4"/></svg>
<div class="btn" style="left:794px;top:846px;width:163px;height:33px;"></div>
<div class="a" style="left:calc(811.25px - 1.00px);top:853.61px;font-size:16px;line-height:18px;color:#505050"><span style="letter-spacing:-0.300px;">Расчетный листок</span></div>
<div class="btn" style="left:991px;top:846px;width:72px;height:33px;"></div>
<div class="a" style="left:calc(1008.50px - 1.00px);top:853.61px;font-size:16px;line-height:18px;color:#505050"><span style="letter-spacing:-0.750px;">Еще</span></div>
<svg class="a" style="left:1048px;top:861px;" width="7" height="5" viewBox="0 0 7 5"><path d="M0.5 0.6h6L3.5 3.8z" fill="#484848"/></svg>
<div class="a" style="left:22px;top:890px;width:1041px;height:36px;background:#f2f2f2;"></div>
<div class="a" style="left:23px;top:927px;width:1039px;height:63px;background:#fff2c4;"></div>
<div class="ln" style="left:22px;top:890px;width:1041px;height:1px;background:#a6a6a6"></div>
<div class="ln" style="left:22px;top:890px;width:1px;height:178px;background:#a6a6a6"></div>
<div class="ln" style="left:1062px;top:890px;width:1px;height:178px;background:#a6a6a6"></div>
<div class="ln" style="left:23px;top:925px;width:1039px;height:1px;background:#d4d4d4"></div>
<div class="ln" style="left:106px;top:891px;width:1px;height:34px;background:#d0d0d0"></div>
<div class="ln" style="left:107px;top:891px;width:1px;height:34px;background:#f9f9f9"></div>
<div class="ln" style="left:106px;top:927px;width:1px;height:63px;background:#fffaf0"></div>
<div class="ln" style="left:271px;top:891px;width:1px;height:34px;background:#d0d0d0"></div>
<div class="ln" style="left:272px;top:891px;width:1px;height:34px;background:#f9f9f9"></div>
<div class="ln" style="left:271px;top:927px;width:1px;height:63px;background:#fffaf0"></div>
<div class="ln" style="left:379px;top:891px;width:1px;height:34px;background:#d0d0d0"></div>
<div class="ln" style="left:380px;top:891px;width:1px;height:34px;background:#f9f9f9"></div>
<div class="ln" style="left:379px;top:927px;width:1px;height:63px;background:#fffaf0"></div>
<div class="ln" style="left:487px;top:891px;width:1px;height:34px;background:#d0d0d0"></div>
<div class="ln" style="left:488px;top:891px;width:1px;height:34px;background:#f9f9f9"></div>
<div class="ln" style="left:487px;top:927px;width:1px;height:63px;background:#fffaf0"></div>
<div class="ln" style="left:608px;top:891px;width:1px;height:34px;background:#d0d0d0"></div>
<div class="ln" style="left:609px;top:891px;width:1px;height:34px;background:#f9f9f9"></div>
<div class="ln" style="left:608px;top:927px;width:1px;height:63px;background:#fffaf0"></div>
<div class="ln" style="left:844px;top:891px;width:1px;height:34px;background:#d0d0d0"></div>
<div class="ln" style="left:845px;top:891px;width:1px;height:34px;background:#f9f9f9"></div>
<div class="ln" style="left:844px;top:927px;width:1px;height:63px;background:#fffaf0"></div>
<div class="ln" style="left:1015px;top:927px;width:1px;height:63px;background:#fffaf0"></div>
<div class="ln" style="left:845px;top:958px;width:217px;height:1px;background:#fffaf0"></div>
<div class="ln" style="left:23px;top:990px;width:1039px;height:1px;background:#efefef"></div>
<div class="ln" style="left:23px;top:1057px;width:1039px;height:1px;background:#e2e2e2"></div>
<div class="a" style="left:33.25px;top:898.71px;font-size:16px;line-height:18px;color:#4d4d4d">N</div>
<div class="a" style="left:calc(117.50px - 1.00px);top:898.71px;font-size:16px;line-height:18px;color:#4d4d4d"><span style="letter-spacing:-0.312px;">Сотрудник</span></div>
<div class="a" style="left:calc(282.50px - 1.00px);top:898.71px;font-size:16px;line-height:18px;color:#4d4d4d"><span style="letter-spacing:0.062px;">Подразде…</span></div>
<div class="a" style="left:calc(390.50px - 1.00px);top:898.71px;font-size:16px;line-height:18px;color:#4d4d4d"><span style="letter-spacing:-0.500px;">Начисление</span></div>
<div class="a" style="left:498.75px;top:898.71px;font-size:16px;line-height:18px;color:#4d4d4d">Результат</div>
<div class="a" style="left:calc(619.50px - 1.00px);top:898.71px;font-size:16px;line-height:18px;color:#4d4d4d"><span style="letter-spacing:-0.125px;">Скидка по взносам</span></div>
<div class="a" style="left:calc(855.50px - 1.00px);top:898.71px;font-size:16px;line-height:18px;color:#4d4d4d"><span style="letter-spacing:-0.188px;">Отработано (оплачено)</span></div>
<div class="a" style="left:23px;top:927px;width:83px;height:63px;background:#ffe792;border:3px solid #f9cb1e"></div>
<div class="a" style="right:992.00px;top:933.71px;font-size:16px;line-height:18px;color:#3a3a3a">1</div>
<div class="a" style="left:calc(117.50px - 1.00px);top:933.71px;font-size:16px;line-height:18px;color:#3a3a3a"><span style="letter-spacing:-0.150px;">Базин Антон</span></div>
<div class="a" style="left:calc(117.50px - 1.00px);top:951.91px;font-size:16px;line-height:18px;color:#3a3a3a"><span style="letter-spacing:-0.250px;">Владимирович</span></div>
<div class="a" style="left:calc(282.50px - 1.00px);top:933.71px;font-size:16px;line-height:18px;color:#3a3a3a"><span style="letter-spacing:-0.107px;">Основное</span></div>
<div class="a" style="left:calc(390.50px - 1.00px);top:933.71px;font-size:16px;line-height:18px;color:#3a3a3a"><span style="letter-spacing:-0.344px;">Оплата по</span></div>
<div class="a" style="left:calc(390.50px - 1.00px);top:951.91px;font-size:16px;line-height:18px;color:#3a3a3a"><span style="letter-spacing:-0.354px;">окладу (по...</span></div>
<div class="a" style="right:490.00px;top:933.71px;font-size:16px;line-height:18px;color:#3a3a3a">65&nbsp;000,00</div>
<div class="a" style="left:calc(965.25px - 1.00px);top:933.71px;font-size:16px;line-height:18px;color:#3a3a3a"><span style="letter-spacing:0.125px;">22,00</span></div>
<div class="a" style="left:calc(957.25px - 1.00px);top:966.46px;font-size:16px;line-height:18px;color:#3a3a3a"><span style="letter-spacing:0.100px;">175,00</span></div>
<div class="a" style="left:calc(1025.50px - 0.00px);top:933.71px;font-size:16px;line-height:18px;color:#3a3a3a"><span style="letter-spacing:-0.250px;">дн.</span></div>
<div class="a" style="left:calc(1025.50px - 1.00px);top:966.46px;font-size:16px;line-height:18px;color:#3a3a3a"><span style="letter-spacing:0.625px;">чс.</span></div>
<div class="a" style="right:992.00px;top:999.96px;font-size:16px;line-height:18px;color:#3a3a3a">2</div>
<div class="a" style="left:calc(117.50px - 1.00px);top:999.96px;font-size:16px;line-height:18px;color:#3a3a3a"><span style="letter-spacing:-0.156px;">Сурков Константин</span></div>
<div class="a" style="left:calc(117.50px - 1.00px);top:1017.61px;font-size:16px;line-height:18px;color:#3a3a3a"><span style="letter-spacing:0.062px;">Семенович</span></div>
<div class="a" style="left:calc(282.50px - 1.00px);top:999.96px;font-size:16px;line-height:18px;color:#3a3a3a"><span style="letter-spacing:-0.107px;">Основное</span></div>
<div class="a" style="left:calc(390.50px - 1.00px);top:999.96px;font-size:16px;line-height:18px;color:#3a3a3a"><span style="letter-spacing:-0.344px;">Оплата по</span></div>
<div class="a" style="left:calc(390.50px - 1.00px);top:1017.61px;font-size:16px;line-height:18px;color:#3a3a3a"><span style="letter-spacing:-0.354px;">окладу (по...</span></div>
<div class="a" style="right:490.00px;top:999.96px;font-size:16px;line-height:18px;color:#3a3a3a">100&nbsp;000,00</div>
<div class="a" style="left:calc(965.25px - 1.00px);top:999.96px;font-size:16px;line-height:18px;color:#3a3a3a"><span style="letter-spacing:0.125px;">22,00</span></div>
<div class="a" style="left:calc(957.25px - 1.00px);top:1032.46px;font-size:16px;line-height:18px;color:#3a3a3a"><span style="letter-spacing:0.100px;">175,00</span></div>
<div class="a" style="left:calc(1025.50px - 0.00px);top:999.96px;font-size:16px;line-height:18px;color:#3a3a3a"><span style="letter-spacing:-0.250px;">дн.</span></div>
<div class="a" style="left:calc(1025.50px - 1.00px);top:1032.46px;font-size:16px;line-height:18px;color:#3a3a3a"><span style="letter-spacing:0.625px;">чс.</span></div>
<div class="a" style="left:calc(8.30px - 1.00px);top:1088.71px;font-size:16px;line-height:18px;color:#555"><span style="letter-spacing:-0.270px;">Планируемая</span></div>
<div class="a" style="left:calc(8.30px - 0.00px);top:1106.81px;font-size:16px;line-height:18px;color:#555"><span style="letter-spacing:-0.117px;">дата выплаты:</span></div>
<div class="fld" style="left:131px;top:1088px;width:153px;height:28px;border-color:#b5b5b5"></div>
<div class="a" style="left:calc(135.10px - 1.00px);top:1093.71px;font-size:16px;line-height:18px;color:#3a3a3a"><span style="letter-spacing:0.044px;">05.04.2023</span></div>
<div class="ln" style="left:257px;top:1089px;width:1px;height:26px;background:#b5b5b5"></div>
<svg class="a" style="left:264px;top:1096px;" width="12" height="13" viewBox="0 0 12 13"><rect x="0.6" y="2" width="10.8" height="10.4" rx="1.4" fill="#fff" stroke="#3f3f3f" stroke-width="1.2"/><path d="M0.6 3.4a1.4 1.4 0 0 1 1.4-1.4h8a1.4 1.4 0 0 1 1.4 1.4v1.7h-10.8z" fill="#3f3f3f"/><rect x="1.8" y="0" width="3" height="3.4" rx="1.4" fill="#3f3f3f"/><rect x="7.2" y="0" width="3" height="3.4" rx="1.4" fill="#3f3f3f"/><rect x="2.85" y="0.8" width="0.9" height="1.8" rx="0.4" fill="#fff"/><rect x="8.25" y="0.8" width="0.9" height="1.8" rx="0.4" fill="#fff"/><g fill="#3f3f3f"><rect x="2" y="6.2" width="1.8" height="1.8"/><rect x="5.1" y="6.2" width="1.8" height="1.8"/><rect x="8.2" y="6.2" width="1.8" height="1.8"/><rect x="2" y="9.2" width="1.8" height="1.8"/><rect x="5.1" y="9.2" width="1.8" height="1.8"/><rect x="8.2" y="9.2" width="1.8" height="1.8"/></g></svg>
<div class="a" style="left:134px;top:1112.8px;width:83px;height:2.6px;background:#f8393f;border-radius:1.3px"></div>
</body></html>
